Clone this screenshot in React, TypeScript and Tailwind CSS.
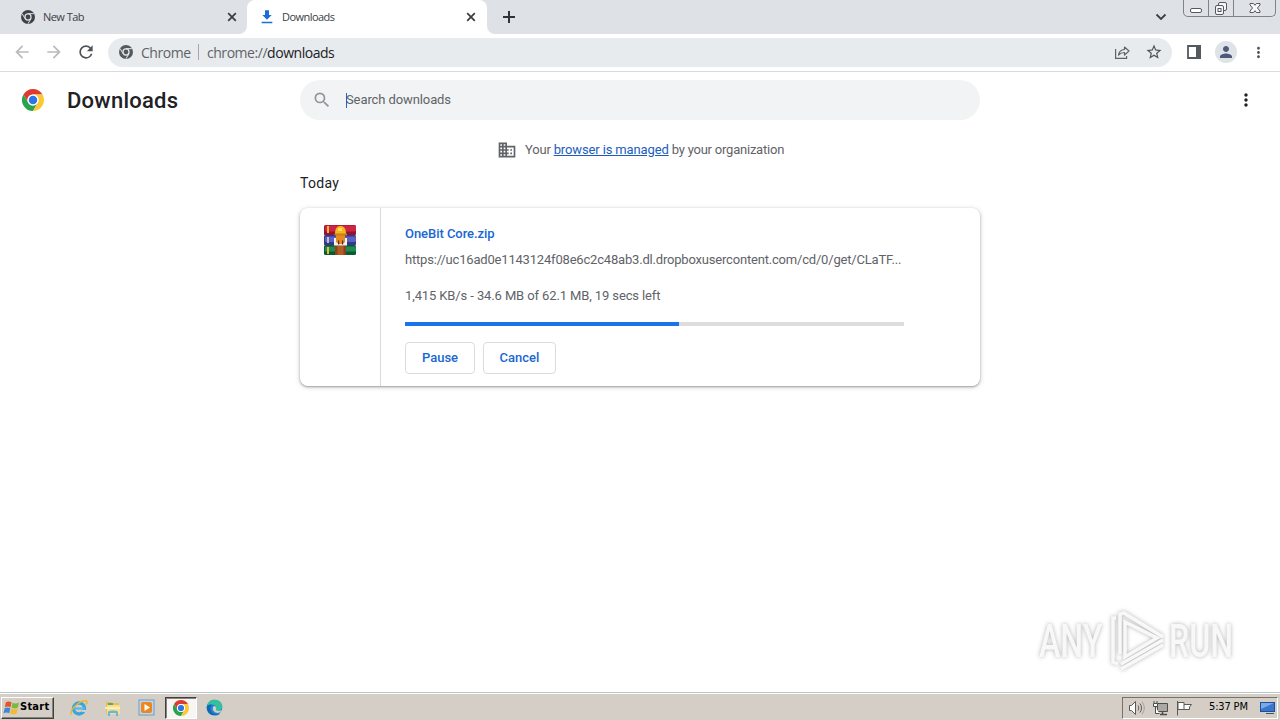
import type { ReactNode } from "react";

const RED = "M24 12H44.78A24 24 0 0 0 3.215 12L13.608 30A12 12 0 0 1 24 12Z";
const GREEN = "M13.608 30L3.215 12A24 24 0 0 0 24 48L34.39 30A12 12 0 0 1 13.608 30Z";
const YELLOW = "M34.39 30L24 48A24 24 0 0 0 44.78 12H24A12 12 0 0 1 34.39 30Z";

function ChromeLogo({ className }: { className: string }) {
  return (
    <svg viewBox="0 0 48 48" className={className}>
      <path d={RED} fill="#dd3b30" />
      <path d={GREEN} fill="#2ba24c" />
      <path d={YELLOW} fill="#fcc934" />
      <circle cx="24" cy="24" r="12" fill="#fff" />
      <circle cx="24" cy="24" r="9.3" fill="#2f74e6" />
    </svg>
  );
}

function ChromeMono({ className, gap }: { className: string; gap: string }) {
  return (
    <svg viewBox="0 0 48 48" className={className}>
      <circle cx="24" cy="24" r="24" fill="currentColor" />
      <circle cx="24" cy="24" r="12.5" fill={gap} />
      <path d="M24 12.5H44M14 29.8L4 12.5M34 29.8L24 47" stroke={gap} strokeWidth="3.4" />
      <circle cx="24" cy="24" r="8.2" fill="currentColor" />
    </svg>
  );
}

function Icon({ d, className, box = "0 0 24 24" }: { d: string; className: string; box?: string }) {
  return (
    <svg viewBox={box} className={className} fill="currentColor">
      <path d={d} />
    </svg>
  );
}

const BACK = "M20 11H7.83l5.59-5.59L12 4l-8 8 8 8 1.41-1.41L7.83 13H20v-2z";
const FORWARD = "M12 4l-1.41 1.41L16.17 11H4v2h12.17l-5.58 5.59L12 20l8-8z";
const RELOAD =
  "M17.65 6.35A7.958 7.958 0 0 0 12 4a8 8 0 1 0 7.73 10h-2.08A5.99 5.99 0 0 1 12 18a6 6 0 1 1 0-12c1.66 0 3.14.69 4.22 1.78L13 11h7V4l-2.35 2.35z";
const STAR =
  "M22 9.24l-7.19-.62L12 2 9.19 8.63 2 9.24l5.46 4.73L5.82 21 12 17.27 18.18 21l-1.63-7.03L22 9.24zM12 15.4l-3.76 2.27 1-4.28-3.32-2.88 4.38-.38L12 6.1l1.71 4.04 4.38.38-3.32 2.88 1 4.28L12 15.4z";
const SEARCH =
  "M15.5 14h-.79l-.28-.27A6.471 6.471 0 0 0 16 9.5 6.5 6.5 0 1 0 9.5 16c1.61 0 3.09-.59 4.23-1.57l.27.28v.79l5 4.99L20.49 19l-4.99-5zm-6 0C7.01 14 5 11.99 5 9.5S7.01 5 9.5 5 14 7.01 14 9.5 11.99 14 9.5 14z";
const BUSINESS =
  "M12 7V3H2v18h20V7H12zM6 19H4v-2h2v2zm0-4H4v-2h2v2zm0-4H4V9h2v2zm0-4H4V5h2v2zm4 12H8v-2h2v2zm0-4H8v-2h2v2zm0-4H8V9h2v2zm0-4H8V5h2v2zm10 12h-8v-2h2v-2h-2v-2h2v-2h-2V9h8v10zm-2-8h-2v2h2v-2zm0 4h-2v2h2v-2z";
const PERSON =
  "M12 12c2.21 0 4-1.79 4-4s-1.79-4-4-4-4 1.79-4 4 1.79 4 4 4zm0 2c-2.67 0-8 1.34-8 4v2h16v-2c0-2.66-5.33-4-8-4z";
const MORE =
  "M12 8c1.1 0 2-.9 2-2s-.9-2-2-2-2 .9-2 2 .9 2 2 2zm0 2c-1.1 0-2 .9-2 2s.9 2 2 2 2-.9 2-2-.9-2-2-2zm0 6c-1.1 0-2 .9-2 2s.9 2 2 2 2-.9 2-2-.9-2-2-2z";
const DOWNLOAD = "M19 9h-4V2H9v7H5l7 7 7-7zM4 19v2.4h16V19H4z";

function CloseX() {
  return (
    <svg viewBox="0 0 10 10" className="size-[10px] text-[#3c4043]">
      <path d="M1.2 1.2l7.6 7.6M8.8 1.2L1.2 8.8" stroke="currentColor" strokeWidth="1.8" />
    </svg>
  );
}

function CaptionButtons() {
  return (
    <div className="mr-[4px] flex h-[17px] w-[93px] rounded-b-[5px] border border-t-0 border-[#7f8289] text-[#55585e]">
      <div className="flex w-[25px] shrink-0 justify-center border-r border-[#7f8289]">
        <svg viewBox="0 0 24 16" className="h-4 w-6">
          <rect x="6.5" y="8.5" width="11" height="4" rx="1.5" fill="#fff" stroke="currentColor" />
        </svg>
      </div>
      <div className="flex w-[25px] shrink-0 justify-center border-r border-[#7f8289]">
        <svg viewBox="0 0 24 16" className="h-4 w-6" fill="#f6f7f9" stroke="currentColor">
          <rect x="9.5" y="2.5" width="8" height="8" rx="1.5" />
          <rect x="6.5" y="5.5" width="8" height="9" rx="1.5" />
          <rect x="9" y="8.5" width="3" height="3" />
        </svg>
      </div>
      <div className="flex flex-1 justify-center">
        <svg viewBox="0 0 24 16" className="h-4 w-6">
          <path
            d="M7 3.500h3.600l1.400 1.800 1.400-1.800H17v1.400L14.500 8l2.500 3.100v1.400h-3.600L12 10.700l-1.400 1.800H7v-1.400L9.500 8 7 4.900z"
            fill="#f6f7f9"
            stroke="currentColor"
          />
        </svg>
      </div>
    </div>
  );
}

function TabStrip() {
  return (
    <div className="flex h-[34px] bg-[#dee1e6] font-['Open_Sans',sans-serif] text-[11px] text-[#3c4043]">
      <div className="flex w-[247px] items-center pl-[21px] pr-[10px]">
        <ChromeMono className="size-[14px] text-[#3f4349]" gap="#dee1e6" />
        <span className="ml-2 flex-1 tracking-[-0.55px]">New Tab</span>
        <CloseX />
      </div>
      <div className="relative flex w-[240px] items-center rounded-t-[8px] bg-white pl-[12px] pr-[11px]">
        <svg viewBox="0 0 8 8" className="absolute -left-2 bottom-0 size-2">
          <path d="M8 0v8H0a8 8 0 0 0 8-8z" fill="#fff" />
        </svg>
        <svg viewBox="0 0 8 8" className="absolute -right-2 bottom-0 size-2">
          <path d="M0 0v8h8a8 8 0 0 1-8-8z" fill="#fff" />
        </svg>
        <Icon d={DOWNLOAD} className="size-4 text-[#1a6dd6]" />
        <span className="ml-[7px] flex-1 tracking-[-0.55px]">Downloads</span>
        <CloseX />
      </div>
      <div className="flex flex-1 items-center pl-[16px]">
        <svg viewBox="0 0 12 12" className="size-3 text-[#303338]">
          <path d="M6 0v12M0 6h12" stroke="currentColor" strokeWidth="2" />
        </svg>
      </div>
      <svg viewBox="0 0 12 12" className="mr-[16px] mt-[11px] size-3 text-[#3c4043]">
        <path d="M1.5 3.5L6 8l4.500-4.500" fill="none" stroke="currentColor" strokeWidth="1.8" />
      </svg>
      <CaptionButtons />
    </div>
  );
}

function Toolbar() {
  return (
    <div className="flex h-[38px] items-center border-b border-[#d9dbde] bg-white pb-px font-['Open_Sans',sans-serif]">
      <Icon d={BACK} className="ml-[12px] size-5 text-[#b9bbbe]" />
      <Icon d={FORWARD} className="ml-[12px] size-5 text-[#b9bbbe]" />
      <Icon d={RELOAD} className="ml-[12px] size-5 text-[#505356]" />
      <div className="ml-[12px] flex h-[29px] w-[1064px] items-center rounded-full bg-[#e8ebed] pl-[11px] text-[14px] text-[#5f6368]">
        <ChromeMono className="size-[14px] text-[#55585d]" gap="#e8ebed" />
        <span className="ml-2 w-[57px] tracking-[-0.45px]">Chrome</span>
        <span className="mr-[8px] h-4 w-px bg-[#a3a6aa]" />
        <span className="flex-1 tracking-[-0.46px]">
          chrome://<span className="text-[#202124]">downloads</span>
        </span>
        <svg viewBox="0 0 16 16" className="mr-[15px] size-4 text-[#5f6368]" fill="none" stroke="currentColor" strokeWidth="1.2">
          <path d="M1.600 5v9.400h11V12" />
          <path d="M4.500 11c.5-3.500 2.500-5.300 6-5.500V3l4.500 4-4.500 4V8.500c-2.700 0-4.500.8-6 2.500z" strokeLinejoin="round" />
        </svg>
        <Icon d={STAR} className="mr-[9px] size-[18px] text-[#505459]" />
      </div>
      <svg viewBox="0 0 14 14" className="ml-[15px] size-[14px] text-[#55585c]">
        <path d="M1 1h12v12H1z" fill="#fff" stroke="currentColor" strokeWidth="1.8" />
        <path d="M9 0h5v14H9z" fill="currentColor" />
      </svg>
      <span className="ml-[14px] flex size-[22px] items-center justify-center rounded-full bg-[#dfe2e7]">
        <Icon d={PERSON} className="size-[18px] text-[#4d5a78]" />
      </span>
      <Icon d={MORE} className="ml-[13px] size-[17px] text-[#505356]" />
    </div>
  );
}

function ArchiveIcon() {
  return (
    <svg viewBox="0 0 32 32" className="mt-4 size-8">
      <rect x="0" y="1" width="32" height="10.500" rx="1.500" fill="#93142c" />
      <rect x="1" y="1.500" width="31" height="6" rx="1" fill="#cf2444" />
      <rect x="0" y="11" width="32" height="10.500" rx="1.500" fill="#34378c" />
      <rect x="1" y="12.500" width="31" height="5.500" rx="1" fill="#5b60c4" />
      <rect x="0" y="21" width="32" height="10" rx="1.500" fill="#0b5a32" />
      <rect x="1" y="22.500" width="31" height="5" rx="1" fill="#1f8b50" />
      <path d="M3 2h2v7H3zM3 23h2v7H3z" fill="#edb93c" />
      <path d="M3 13h2v6H3z" fill="#c3bdc1" />
      <path d="M11 21h11v10H11z" fill="#8f4219" />
      <path d="M13.500 22h6v9h-6z" fill="#b35c29" />
      <path d="M10 14h13v7.500H10z" fill="#f6f4f1" />
      <path d="M12 11h9v7l-2.500 2h-4L12 18z" fill="#e58a22" />
      <path d="M14 16.500h1.200v4H14zM18 16.500h1.200v4H18z" fill="#493126" />
      <path d="M11 10c0-5.500 2-8 5.500-8S22 4.500 22 10z" fill="#f5b51e" />
      <path d="M10.500 9.500h12.500v2H10.500z" fill="#cf7d14" />
      <path d="M14 4h4v3h-4z" fill="#ffdf62" />
    </svg>
  );
}

function ActionButton({ children, className }: { children: ReactNode; className: string }) {
  return (
    <button
      className={`${className} h-8 rounded-[4px] border border-[#dadce0] text-[13px] font-medium text-[#1967d2]`}
    >
      {children}
    </button>
  );
}

function DownloadCard() {
  return (
    <div className="flex h-[178px] w-[680px] rounded-[8px] bg-white text-[13px] shadow-[0_1px_2px_rgba(60,64,67,0.4),0_1px_4px_1px_rgba(60,64,67,0.18)]">
      <div className="flex w-[81px] justify-center border-r border-[#d9dadc]">
        <ArchiveIcon />
      </div>
      <div className="flex w-[523px] flex-col pl-6 pt-[16px] text-[#5f6368]">
        <a className="h-5 whitespace-nowrap leading-5 font-medium tracking-[-0.05px] text-[#1967d2]">OneBit Core.zip</a>
        <div className="mt-[6px] h-5 whitespace-nowrap leading-5 tracking-[-0.19px]">
          https://uc16ad0e1143124f08e6c2c48ab3.dl.dropboxusercontent.com/cd/0/get/CLaTF...
        </div>
        <div className="mt-[16px] h-5 leading-5 tracking-[-0.115px]">1,415 KB/s - 34.6 MB of 62.1 MB, 19 secs left</div>
        <div className="mt-[16px] h-1 w-[499px] bg-[#dddddd]">
          <div className="h-1 w-[274.400px] bg-[#1a73e8]" />
        </div>
        <div className="mt-[16px] flex gap-2">
          <ActionButton className="w-[70px]">Pause</ActionButton>
          <ActionButton className="w-[73px]">Cancel</ActionButton>
        </div>
      </div>
    </div>
  );
}

function Watermark() {
  return (
    <div className="absolute left-[1039px] top-[536px] flex h-[66px] w-[200px] items-center font-['Roboto',sans-serif] text-[46px] leading-none font-medium text-[#f8f8f8] drop-shadow-[0_0_2px_rgba(0,0,0,0.3)]">
      <span className="w-[70px]">
        <span className="inline-block origin-left scale-x-[0.7]">ANY</span>
      </span>
      <svg viewBox="0 0 58 62" className="h-[62px] w-[58px] shrink-0" fill="none" stroke="currentColor" strokeWidth="3.500">
        <path d="M16 12v35l32-19z" />
        <path d="M11 44V4l4-1 39 24" />
        <path d="M7 8H4v44l5 2M12 54l42-24M12 59l42-24" />
      </svg>
      <span className="ml-[2px]">
        <span className="inline-block origin-left scale-x-[0.7]">RUN</span>
      </span>
    </div>
  );
}

function DownloadsPage() {
  return (
    <div className="relative h-[620px] overflow-hidden bg-white font-['Roboto',sans-serif]">
      <div className="flex h-14 items-center">
        <ChromeLogo className="ml-[22px] size-[22px]" />
        <h1 className="ml-[23px] w-[233px] text-[22px] font-medium tracking-[0.25px] text-[#202124]">Downloads</h1>
        <div className="flex h-10 w-[680px] items-center rounded-full bg-[#f1f3f4] pl-[12px] text-[13px] text-[#5f6368]">
          <Icon d={SEARCH} className="size-5 text-[#919599]" />
          <span className="ml-[14px] h-[15px] w-px bg-[#1967d2]" />
          <span className="-ml-px tracking-[-0.1px]">Search downloads</span>
        </div>
        <Icon d={MORE} className="ml-[256px] size-5 text-[#202124]" />
      </div>
      <div className="flex h-11 items-center pl-[497px] text-[13px] text-[#5f6368]">
        <Icon d={BUSINESS} className="size-5" />
        <span className="ml-2 tracking-[-0.185px]">
          Your <a className="tracking-[-0.13px] text-[#1a5dbd] underline">browser is managed</a>
          <span className="tracking-[-0.22px]"> by your organization</span>
        </span>
      </div>
      <div className="flex flex-col pl-[300px]">
        <h2 className="h-9 pt-px text-[14px] leading-5 tracking-[0.3px] text-[#202124]">Today</h2>
        <DownloadCard />
      </div>
      <Watermark />
    </div>
  );
}

function WindowsFlag() {
  return (
    <svg viewBox="0 0 18 16" className="h-4 w-[17px]">
      <path d="M3 2c2-1.300 4-1.300 6 0L8 7.300c-2-1.200-4-1.200-6 0z" fill="#e4542a" />
      <path d="M10 2.400c2 1.200 4.500 1.200 7-.2l-1.200 5.300c-2.300 1.300-4.500 1.300-6.800.2z" fill="#7cb940" />
      <path d="M1.800 8.300c2-1.200 4-1.200 6 0l-1.200 5.300c-1.800-1.200-3.800-1.200-6 0z" fill="#3b8ad6" />
      <path d="M8.800 8.700c2.300 1.100 4.500 1.100 6.800-.2l-1.200 5.200c-2.300 1.300-4.500 1.300-6.800.2z" fill="#f4b92c" />
    </svg>
  );
}

function Taskbar() {
  return (
    <div className="flex h-7 items-center border-t border-[#b9c6c6] bg-[#d5cec6] font-['DejaVu_Sans_Condensed','DejaVu_Sans',sans-serif] text-[11px] text-black shadow-[inset_0_1px_0_#fff]">
      <div className="ml-px mt-[2px] flex h-[22px] w-[53px] items-center border border-b-[#404040] border-l-white border-r-[#404040] border-t-white pl-px font-bold shadow-[inset_-1px_-1px_0_#87827c]">
        <WindowsFlag />
        <span className="tracking-[0.25px]">Start</span>
      </div>
      <svg viewBox="0 0 18 18" className="ml-[16px] mt-[2px] size-[18px]" fill="none">
        <circle cx="9" cy="9.500" r="5.500" stroke="#39a5df" strokeWidth="3.400" />
        <path d="M4 9.500h11" stroke="#55baf0" strokeWidth="2.200" />
        <path d="M12 11h5v2h-5z" fill="#d5cec6" />
        <path d="M1.500 15.500C-1 10 12 0 16.500 2.200c1 .7.500 2-.5 3.500" stroke="#eab72f" strokeWidth="1.500" />
      </svg>
      <svg viewBox="0 0 18 18" className="ml-[16px] mt-[2px] size-[18px]">
        <path d="M2 3h5l1 1h7v11H2z" fill="#e6bf58" />
        <path d="M4 4h5v3H4z" fill="#59aa67" />
        <path d="M3 6h13v9H3z" fill="#f8df8d" />
        <path d="M1 8h15v2H1z" fill="#fbeeb7" />
        <path d="M4 17v-4c0-2 10-2 10 0v4h-2v-3H6v3z" fill="#68b5dd" />
      </svg>
      <svg viewBox="0 0 17 17" className="ml-[16px] mr-px mt-[2px] size-[17px]">
        <rect x="1" y="1" width="15" height="15" fill="#b9d8ef" stroke="#6f9ebd" />
        <rect x="3" y="3" width="11" height="11" rx="2" fill="#f0851d" />
        <path d="M6.500 5v7l5.500-3.500z" fill="#fff" />
      </svg>
      <div className="ml-[9px] mt-[2px] flex h-[22px] w-8 items-center justify-center border border-b-white border-l-[#404040] border-r-white border-t-[#404040] bg-[#f8f6f4] shadow-[inset_1px_1px_0_#87827c]">
        <ChromeLogo className="size-4" />
      </div>
      <svg viewBox="0 0 24 24" className="ml-[9px] mt-[2px] size-[17px]">
        <circle cx="12" cy="12" r="11" fill="#1688d1" />
        <path d="M1.500 9C3 3.500 7 1 12 1c7 0 11 4.500 11 9.500 0 4-3 6-6.500 6-2.500 0-3.500-1-3-2 2.500-3-.5-6.500-4-6.500-3 0-6 .5-8 1z" fill="#36bf9c" />
        <path d="M1 12c0-3 4-5 8-4-4 2-4 9 1 12 3 2 7 2 10 0-2 2.500-5 3.500-8 3C5 23 1 18 1 12z" fill="#1366b5" />
        <path d="M14 14.500c0 2.500 4.500 3 8 1-1 2-2 3-3.500 4-5 1-9-2-9-6 0-2 1-3 2.500-3.500 2 1 3 2.500 2 4.500z" fill="#d5cec6" />
      </svg>
      <div className="flex-1" />
      <div className="mr-[2px] mt-[2px] flex h-[22px] w-[156px] items-center border border-b-white border-l-[#77726c] border-r-white border-t-[#77726c] pl-[5px]">
        <svg viewBox="0 0 18 16" className="h-4 w-[18px]" fill="none" stroke="#5d5a56">
          <path d="M1.500 5.500h2l4-4v13l-4-4h-2z" fill="#fff" />
          <path d="M10 5.500c1 1.500 1 3.500 0 5M12 3.500c2 2.500 2 6.500 0 9" />
          <path d="M14 1.800c3 3.500 3 9 0 12.400" stroke="#a39e98" />
        </svg>
        <svg viewBox="0 0 18 16" className="ml-[6px] h-4 w-[18px]" fill="none" stroke="#4f4d4a">
          <path d="M5.500 3.500h10v8h-10z" fill="#aaa8a5" />
          <path d="M8 14.500h7M10.500 12v2" strokeWidth="1.500" />
          <path d="M2 1v2M5 1v2M1.500 3.500h4v3h-4zM3.500 7v6.500h4" fill="#fff" />
        </svg>
        <svg viewBox="0 0 18 16" className="ml-[6px] h-4 w-[18px]" fill="#fff" stroke="#5d5a56">
          <path d="M1.500 1v14.500M2 2.500h6v7H2zM8 4.500h7.500l-2 2.500v2.500H8" />
        </svg>
        <span className="ml-[15px] w-[51px] whitespace-nowrap tracking-[-0.15px]">5:37 PM</span>
        <svg viewBox="0 0 16 14" className="h-[14px] w-4">
          <path d="M0 1h15v10H0z" fill="#1d4f9f" />
          <path d="M1 2h13v8H1z" fill="#3976cc" />
          <path d="M1 2h13L1 8z" fill="#7ba9e6" />
          <path d="M6 12h8v1H6z" fill="#42536a" />
        </svg>
      </div>
    </div>
  );
}

export default function App() {
  return (
    <div className="flex h-[720px] w-[1280px] flex-col overflow-hidden bg-white">
      <TabStrip />
      <Toolbar />
      <DownloadsPage />
      <Taskbar />
    </div>
  );
}
